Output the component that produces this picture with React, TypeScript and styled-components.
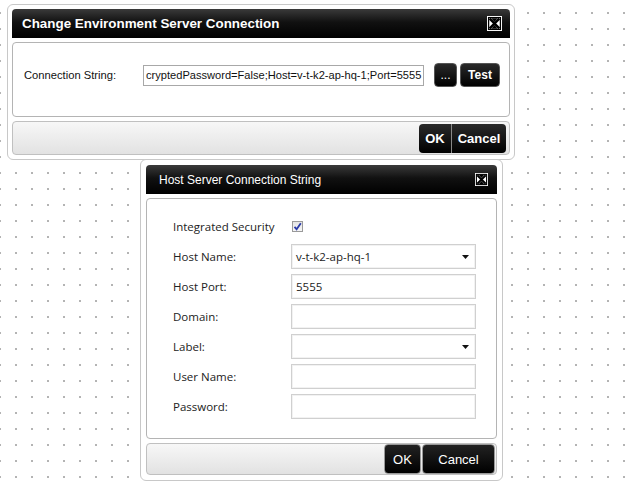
import * as React from "react";
import styled, { createGlobalStyle } from "styled-components";

const CONNECTION_VALUE = "cryptedPassword=False;Host=v-t-k2-ap-hq-1;Port=5555";

const GlobalStyle = createGlobalStyle`
  html, body {
    margin: 0;
    padding: 0;
    width: 630px;
    height: 489px;
    overflow: hidden;
    font-family: "Liberation Sans", Arial, sans-serif;
  }
`;

const CloseIcon: React.FC<{ size: number }> = ({ size }) => (
  <svg width={size} height={size} viewBox="0 0 14 14">
    <rect x="0" y="0" width="14" height="14" fill="#fff" />
    <rect x="1.5" y="1.5" width="11" height="11" fill="none" stroke="#000" strokeWidth="1.2" />
    <path d="M2.5 2.5 L11.5 11.5 M11.5 2.5 L2.5 11.5" stroke="#000" strokeWidth="2.2" />
    <polygon points="4,2 10,2 7,5.5" fill="#000" />
    <polygon points="4,12 10,12 7,8.5" fill="#000" />
  </svg>
);

const Arrow = () => (
  <svg width="7" height="4" viewBox="0 0 7 4">
    <polygon points="0,0 7,0 3.5,4" fill="#111" />
  </svg>
);

const Check = () => (
  <svg width="9" height="9" viewBox="0 0 9 9">
    <path d="M1.5 4.8 L3.6 7.2 L7.8 1.2" fill="none" stroke="#2a3aa8" strokeWidth="1.8" />
  </svg>
);

interface Field {
  label: string;
  value?: string;
  select?: boolean;
}

const FIELDS: Field[] = [
  { label: "Host Name:", value: "v-t-k2-ap-hq-1", select: true },
  { label: "Host Port:", value: "5555" },
  { label: "Domain:" },
  { label: "Label:", select: true },
  { label: "User Name:" },
  { label: "Password:" },
];

const App: React.FC = () => (
  <Canvas>
    <GlobalStyle />

    <Window $left={7} $top={4} $width={508} $pad={4}>
      <TitleBar>
        <Title $bold>Change Environment Server Connection</Title>
        <CloseIcon size={15} />
      </TitleBar>
      <Panel $height={75}>
        <ConnRow>
          <ConnLabel>Connection String:</ConnLabel>
          <ConnInput>{CONNECTION_VALUE}</ConnInput>
          <ButtonGroup>
            <DarkButton $width={23}>...</DarkButton>
            <DarkButton $width={40} $bold>Test</DarkButton>
          </ButtonGroup>
        </ConnRow>
      </Panel>
      <Footer $height={34}>
        <JoinedButtons>
          <JoinedButton $width={32}>OK</JoinedButton>
          <JoinedButton $width={55}>Cancel</JoinedButton>
        </JoinedButtons>
      </Footer>
    </Window>

    <Window $left={140} $top={159} $width={363} $pad={5}>
      <TitleBar $small>
        <Title>Host Server Connection String</Title>
        <CloseIcon size={13} />
      </TitleBar>
      <Panel $height={241}>
        <FormGrid>
          <FormLabel>Integrated Security</FormLabel>
          <CheckCell>
            <CheckBox>
              <Check />
            </CheckBox>
          </CheckCell>
          {FIELDS.map((f) => (
            <React.Fragment key={f.label}>
              <FormLabel>{f.label}</FormLabel>
              <FormInput>
                <span>{f.value ?? ""}</span>
                {f.select && <Arrow />}
              </FormInput>
            </React.Fragment>
          ))}
        </FormGrid>
      </Panel>
      <Footer $height={32}>
        <FooterButtons>
          <OutlinedButton $width={37}>OK</OutlinedButton>
          <OutlinedButton $width={73}>Cancel</OutlinedButton>
        </FooterButtons>
      </Footer>
    </Window>
  </Canvas>
);

export default App;

const Canvas = styled.div`
  position: relative;
  width: 630px;
  height: 489px;
  background-color: #fff;
  background-image: radial-gradient(circle, #8a8a8a 0.6px, transparent 0.9px);
  background-size: 16px 16px;
  background-position: -8px 5px;
`;

const Window = styled.div<{ $left: number; $top: number; $width: number; $pad: number }>`
  position: absolute;
  left: ${(p) => p.$left}px;
  top: ${(p) => p.$top}px;
  width: ${(p) => p.$width}px;
  box-sizing: border-box;
  padding: ${(p) => p.$pad}px;
  background: #fff;
  border: 1px solid #c8c8c8;
  border-radius: 6px;
  display: flex;
  flex-direction: column;
  gap: 4px;
`;

const TitleBar = styled.div<{ $small?: boolean }>`
  height: 29px;
  box-sizing: border-box;
  display: flex;
  align-items: center;
  justify-content: space-between;
  padding: 0 ${(p) => (p.$small ? 9 : 8)}px 0 ${(p) => (p.$small ? 13 : 10)}px;
  background: linear-gradient(#3a3a3a 0%, #111 45%, #000 100%);
  border-radius: 4px 4px 0 0;

  > svg {
    display: block;
  }
`;

const Title = styled.div<{ $bold?: boolean }>`
  color: #fff;
  font-size: ${(p) => (p.$bold ? 13.4 : 12)}px;
  font-weight: ${(p) => (p.$bold ? "bold" : "normal")};
`;

const Panel = styled.div<{ $height: number }>`
  height: ${(p) => p.$height}px;
  box-sizing: border-box;
  border: 1px solid #b4b4b4;
  border-radius: 4px;
  background: #fff;
`;

const Footer = styled.div<{ $height: number }>`
  height: ${(p) => p.$height}px;
  box-sizing: border-box;
  border: 1px solid #c0c0c0;
  border-radius: 4px;
  background: linear-gradient(#f7f7f7, #e2e2e2);
  display: flex;
  align-items: center;
  justify-content: flex-end;
  padding-right: 1px;
`;

const ConnRow = styled.div`
  display: flex;
  align-items: center;
  padding: 20px 0 0 11px;
`;

const ConnLabel = styled.div`
  width: 119px;
  flex-shrink: 0;
  font-size: 11.2px;
  color: #111;
`;

const ConnInput = styled.div`
  width: 281px;
  height: 21px;
  flex-shrink: 0;
  box-sizing: border-box;
  border: 1px solid #a8a8a8;
  padding: 0 2px;
  font-size: 11.1px;
  line-height: 19px;
  color: #111;
  white-space: nowrap;
  overflow: hidden;
`;

const ButtonGroup = styled.div`
  display: flex;
  gap: 3px;
  margin-left: 10px;
`;

const DarkButton = styled.div<{ $width: number; $bold?: boolean }>`
  width: ${(p) => p.$width}px;
  height: 24px;
  box-sizing: border-box;
  background: linear-gradient(#2a2a2a, #000);
  border: 1px solid #555;
  border-radius: 4px;
  color: #fff;
  font-size: 12px;
  font-weight: ${(p) => (p.$bold ? "bold" : "normal")};
  display: flex;
  align-items: center;
  justify-content: center;
`;

const JoinedButtons = styled.div`
  display: flex;
  border-radius: 4px;
  overflow: hidden;
  margin-right: 2px;
`;

const JoinedButton = styled.div<{ $width: number }>`
  width: ${(p) => p.$width}px;
  height: 29px;
  box-sizing: border-box;
  background: linear-gradient(#2a2a2a, #000);
  color: #fff;
  font-size: 13px;
  font-weight: bold;
  display: flex;
  align-items: center;
  justify-content: center;

  & + & {
    border-left: 1px solid #888;
  }
`;

const FooterButtons = styled.div`
  display: flex;
  gap: 1px;
`;

const OutlinedButton = styled.div<{ $width: number }>`
  width: ${(p) => p.$width}px;
  height: 30px;
  box-sizing: border-box;
  background: linear-gradient(#222, #000);
  border: 1px solid #999;
  border-radius: 4px;
  color: #fff;
  font-size: 13px;
  display: flex;
  align-items: center;
  justify-content: center;
`;

const FormGrid = styled.div`
  display: grid;
  grid-template-columns: 118px 185px;
  grid-auto-rows: 25px;
  row-gap: 5px;
  padding: 15px 0 0 26px;
`;

const FormLabel = styled.div`
  display: flex;
  align-items: center;
  font-family: "Open Sans", "Noto Sans", sans-serif;
  font-size: 11.5px;
  color: #222;
`;

const CheckCell = styled.div`
  display: flex;
  align-items: center;
  padding-left: 1px;
`;

const CheckBox = styled.div`
  width: 11px;
  height: 11px;
  box-sizing: border-box;
  border: 1px solid #9a9a9a;
  background: linear-gradient(#e4e4e4, #f6f6f6);
  display: flex;
  align-items: center;
  justify-content: center;
`;

const FormInput = styled.div`
  box-sizing: border-box;
  border: 1px solid #d0d0d0;
  box-shadow: inset 0 0 0 1px #f2f2f2;
  display: flex;
  align-items: center;
  justify-content: space-between;
  padding: 0 6px 0 4px;
  font-family: "Open Sans", "Noto Sans", sans-serif;
  font-size: 11.5px;
  color: #222;
`;
